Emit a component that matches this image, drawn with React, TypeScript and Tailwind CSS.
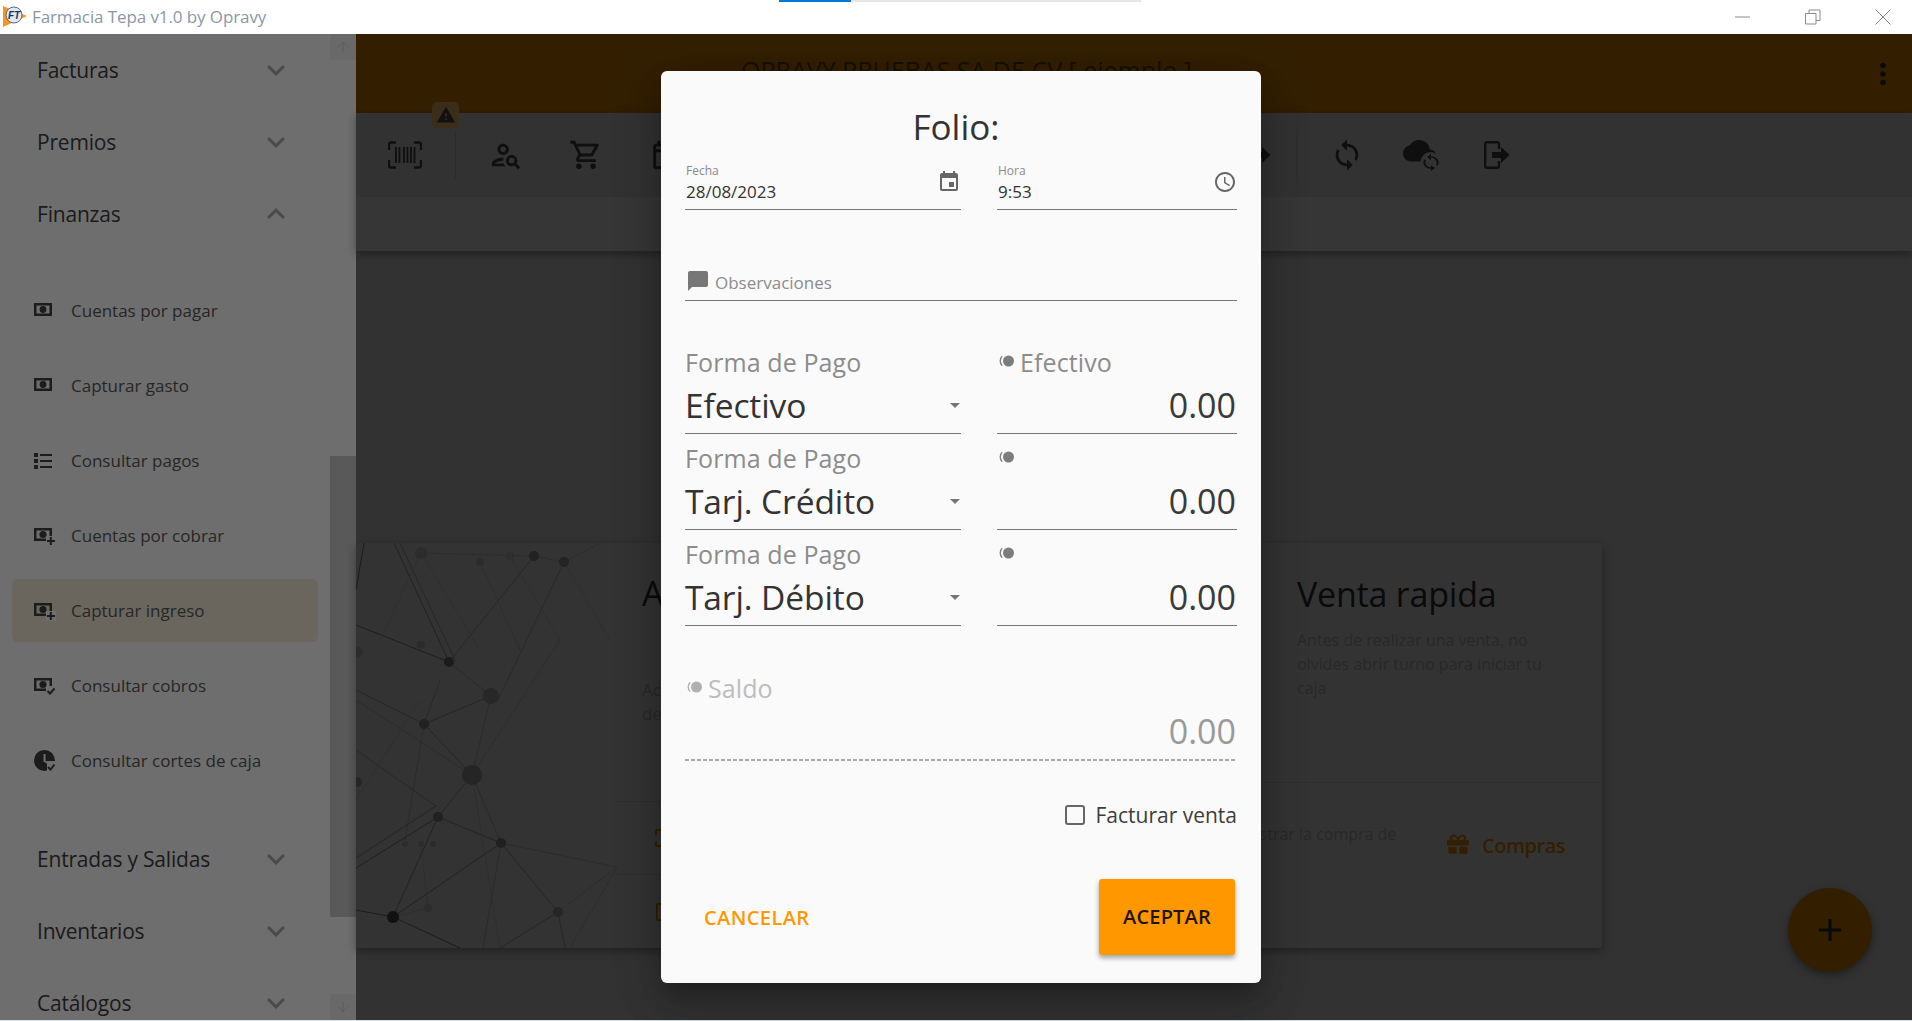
import React from 'react';
import { ArrowUp, ArrowDown } from 'lucide-react';
import { FaGift } from 'react-icons/fa';
import {
  MdExpandMore,
  MdExpandLess,
  MdWarning,
  MdMoreVert,
  MdOutlinePersonSearch,
  MdOutlineShoppingCart,
  MdOutlineEvent,
  MdEvent,
  MdAccessTime,
  MdModeComment,
  MdSync,
  MdAdd,
  MdCropFree,
  MdCheckBoxOutlineBlank,
} from 'react-icons/md';

const FONT = "font-['Open_Sans','Liberation_Sans',sans-serif]";

// money frame used by the finance entries
const MoneyIcon = ({ badge }: { badge?: 'plus' | 'check' }) => (
  <svg width="22" height="20" viewBox="0 0 22 20" fill="none" className="shrink-0">
    <path fillRule="evenodd" d="M0 2h18v13H0zM2.5 4.5v8h13v-8z" fill="#1c1c1c" />
    <circle cx="9" cy="8.5" r={badge ? 3.6 : 3.4} fill="#1c1c1c" />
    {badge && <rect x="12" y="10" width="10" height="10" fill="#6e6e6e" />}
    {badge === 'plus' && <path d="M16.8 11v8M13 15h8" stroke="#1c1c1c" strokeWidth="2" />}
    {badge === 'check' && <path d="M13.5 15l2.5 2.5 4.5-5" stroke="#1c1c1c" strokeWidth="2" />}
  </svg>
);

const ListIcon = () => (
  <svg width="22" height="20" viewBox="0 0 22 20" className="shrink-0" fill="#1c1c1c">
    <path d="M0 2h4v4H0zM0 8h4v4H0zM0 14h4v4H0zM6 3h12v2H6zM6 9h12v2H6zM6 15h12v2H6z" />
  </svg>
);

const CorteIcon = () => (
  <svg width="22" height="24" viewBox="0 0 22 24" className="shrink-0">
    <circle cx="10.5" cy="11.5" r="10.5" fill="#1c1c1c" />
    <path d="M10.5 5v7l3 2" stroke="#6e6e6e" strokeWidth="2" fill="none" />
    <rect x="13" y="12" width="9" height="12" fill="#6e6e6e" />
    <path d="M14 18l2.5 2.5 4-5" stroke="#1c1c1c" strokeWidth="2" fill="none" />
  </svg>
);

const BarcodeIcon = () => (
  <svg width="34" height="28" viewBox="0 0 34 28" fill="none" stroke="#0f0f0f" strokeWidth="2.4">
    <path d="M8 1.5H3a2 2 0 0 0-2 2V9M26 1.5h5a2 2 0 0 1 2 2V9M8 26.5H3a2 2 0 0 1-2-2V19M26 26.5h5a2 2 0 0 0 2-2V19" />
    <path d="M8 6v16M11.5 6v16M16 6v16M19.5 6v16M23 6v16M26.5 6v16" strokeWidth="1.8" />
  </svg>
);

const ExitIcon = () => (
  <svg width="26" height="28" viewBox="0 0 26 28" fill="none">
    <path d="M15 8V3a1.8 1.8 0 0 0-1.8-1.8H3A1.8 1.8 0 0 0 1.2 3v22A1.8 1.8 0 0 0 3 26.8h10.2A1.8 1.8 0 0 0 15 25v-5" stroke="#0f0f0f" strokeWidth="2.4" />
    <path d="M8 11h9V6l8.5 8-8.5 8v-5H8z" fill="#0f0f0f" />
  </svg>
);

const CloudSyncIcon = () => (
  <svg width="38" height="36" viewBox="0 0 38 36" fill="none">
    <path d="M27 12.5C26 6.8 21.5 3 16 3 12 3 8.5 5.3 6.8 8.6 3 9.2 0 12.5 0 16.5 0 20.9 3.6 24.5 8 24.5h18c4 0 7-3.1 7-6.5 0-3.4-2.6-5.300-6-5.500z" fill="#0f0f0f" />
    <circle cx="27.5" cy="25" r="10" fill="#323232" />
    <svg x="19.5" y="16" width="17" height="19" viewBox="3 0 18 24" preserveAspectRatio="none">
      <path
        fill="#0f0f0f"
        d="M12 4V1L8 5l4 4V6c3.31 0 6 2.69 6 6 0 1.01-.25 1.97-.7 2.8l1.46 1.46C19.54 15.03 20 13.57 20 12c0-4.42-3.58-8-8-8zm0 14c-3.31 0-6-2.69-6-6 0-1.01.25-1.97.7-2.8L5.24 7.74C4.46 8.97 4 10.43 4 12c0 4.42 3.58 8 8 8v3l4-4-4-4v3z"
      />
    </svg>
  </svg>
);

const CoinIcon = ({ color }: { color: string }) => (
  <svg width="18" height="14" viewBox="0 0 18 14" fill="none" className="shrink-0 mt-[9px]">
    <circle cx="10.5" cy="7" r="5.5" fill={color} />
    <path d="M4.2 2.3A6.5 6.5 0 0 0 4.2 11.7" stroke={color} strokeWidth="1.3" />
  </svg>
);

const Logo = () => (
  <svg width="26" height="22" viewBox="0 0 26 22">
    <path d="M1 0l24 10L1 21z" fill="#f7941d" />
    <circle cx="12" cy="9" r="8" fill="#e4e8ef" stroke="#5b6a86" />
    <text x="6" y="13" fontSize="10" fontWeight="700" fontStyle="italic" fill="#1d2f63" fontFamily="Liberation Sans, sans-serif">FT</text>
  </svg>
);

// nodes of the background picture
const NODES: [number, number, number, string][] = [
  [421, 553, 6, '#2c2c2c'], [480, 562, 4, '#2c2c2c'], [510, 556, 4, '#2e2e2e'], [534, 556, 5, '#222222'], [564, 562, 5, '#242424'],
  [449, 662, 5, '#1c1c1c'], [421, 645, 4, '#2c2c2c'], [358, 652, 5, '#2c2c2c'], [491, 696, 8, '#282828'], [424, 724, 5, '#222222'],
  [472, 775, 10, '#252525'], [357, 782, 5, '#262626'], [438, 817, 5, '#212121'], [501, 843, 5, '#202020'], [405, 844, 3, '#2c2c2c'],
  [421, 844, 3, '#2c2c2c'], [433, 844, 3, '#2c2c2c'], [393, 917, 6, '#111111'], [558, 912, 5, '#262626'], [428, 908, 4, '#2c2c2c'],
];

const EDGES: [number, number, number, number, string][] = [
  [364, 543, 356, 590, '#1c1c1c'], [394, 543, 449, 662, '#232323'], [400, 543, 456, 662, '#282828'], [356, 625, 449, 662, '#1e1e1e'],
  [534, 556, 449, 662, '#282828'], [564, 562, 498, 700, '#2a2a2a'], [449, 662, 491, 696, '#2a2a2a'], [421, 553, 534, 556, '#2e2e2e'],
  [534, 556, 564, 562, '#2d2d2d'], [564, 562, 600, 543, '#2e2e2e'], [491, 696, 424, 724, '#262626'], [424, 724, 472, 775, '#262626'],
  [356, 690, 424, 724, '#292929'], [440, 680, 424, 724, '#292929'], [424, 724, 405, 840, '#2c2c2c'], [472, 775, 438, 817, '#252525'],
  [472, 775, 501, 843, '#292929'], [356, 700, 472, 775, '#2c2c2c'], [491, 696, 472, 775, '#2c2c2c'], [356, 750, 436, 806, '#292929'],
  [438, 817, 356, 868, '#212121'], [436, 806, 356, 858, '#252525'], [438, 817, 501, 843, '#252525'], [438, 817, 393, 917, '#222222'],
  [501, 843, 393, 917, '#222222'], [501, 843, 558, 912, '#262626'], [501, 843, 617, 867, '#2c2c2c'], [501, 843, 483, 948, '#2a2a2a'],
  [393, 917, 356, 910, '#1c1c1c'], [393, 917, 460, 948, '#1c1c1c'], [558, 912, 500, 948, '#262626'], [558, 912, 565, 948, '#262626'],
  [558, 912, 617, 867, '#2e2e2e'], [617, 867, 570, 948, '#2e2e2e'], [472, 775, 560, 640, '#2e2e2e'], [480, 562, 520, 650, '#2f2f2f'],
  [421, 553, 380, 640, '#2f2f2f'], [421, 553, 480, 650, '#2f2f2f'], [510, 556, 560, 640, '#2f2f2f'], [356, 800, 420, 700, '#2f2f2f'],
  [421, 844, 428, 908, '#2e2e2e'], [428, 908, 393, 917, '#2e2e2e'], [564, 562, 610, 640, '#2f2f2f'], [500, 948, 472, 775, '#2f2f2f'],
];

const NetworkPicture = () => (
  <svg width="261" height="405" viewBox="356 543 261 405" className="block shrink-0">
    {EDGES.map(([x1, y1, x2, y2, c], i) => (
      <line key={i} x1={x1} y1={y1} x2={x2} y2={y2} stroke={c} strokeWidth="1" />
    ))}
    {NODES.map(([cx, cy, r, c], i) => (
      <circle key={i} cx={cx} cy={cy} r={r} fill={c} />
    ))}
  </svg>
);

const SideHeading = ({ label, open }: { label: string; open?: boolean }) => (
  <div className="h-[72px] shrink-0 flex items-center justify-between pl-[37px] pr-[36px]">
    <span className="text-[21px] text-[#1a1a1a] tracking-[-0.2px] mt-[2px]">{label}</span>
    {open ? <MdExpandLess size={36} color="#4a4a4a" /> : <MdExpandMore size={36} color="#4a4a4a" />}
  </div>
);

const SubItem = ({ label, icon, active }: { label: string; icon: React.ReactNode; active?: boolean }) => (
  <div className="h-[75px] pt-[4px] pb-[8px] pl-[12px]">
    <div className={`h-[63px] w-[306px] rounded-md flex items-center pl-[22px] gap-[15px] ${active ? 'bg-[#6a665e]' : ''}`}>
      <span className="w-[22px] flex justify-start">{icon}</span>
      <span className="text-[17px] text-[#262626] mt-[1px]">{label}</span>
    </div>
  </div>
);

const Sidebar = () => (
  <aside className="w-[356px] h-full shrink-0 bg-[#6e6e6e] flex overflow-hidden">
    <div className="w-[330px] shrink-0">
      <SideHeading label="Facturas" />
      <SideHeading label="Premios" />
      <SideHeading label="Finanzas" open />
      <div className="mt-[25px]">
        <SubItem label="Cuentas por pagar" icon={<MoneyIcon />} />
        <SubItem label="Capturar gasto" icon={<MoneyIcon />} />
        <SubItem label="Consultar pagos" icon={<ListIcon />} />
        <SubItem label="Cuentas por cobrar" icon={<MoneyIcon badge="plus" />} />
        <SubItem label="Capturar ingreso" icon={<MoneyIcon badge="plus" />} active />
        <SubItem label="Consultar cobros" icon={<MoneyIcon badge="check" />} />
        <SubItem label="Consultar cortes de caja" icon={<CorteIcon />} />
      </div>
      <div className="mt-[23px]">
        <SideHeading label="Entradas y Salidas" />
        <SideHeading label="Inventarios" />
        <SideHeading label="Catálogos" />
      </div>
    </div>
    <div className="w-[26px] shrink-0 flex flex-col">
      <div className="h-[26px] shrink-0 bg-[#696969] flex items-center justify-center">
        <ArrowUp size={16} color="#5c5c5c" strokeWidth={1.5} />
      </div>
      <div className="flex-1">
        <div className="mt-[396px] h-[461px] bg-[#595959]" />
      </div>
      <div className="h-[26px] shrink-0 bg-[#696969] flex items-center justify-center">
        <ArrowDown size={16} color="#5c5c5c" strokeWidth={1.5} />
      </div>
    </div>
  </aside>
);

const ToolIcon = ({ children }: { children: React.ReactNode }) => (
  <div className="w-[40px] h-[40px] shrink-0 flex items-center justify-center">{children}</div>
);

const Toolbar = () => (
  <div className="relative shrink-0 shadow-[0_3px_8px_rgba(0,0,0,0.35)] z-10">
    <div className="absolute left-[76px] top-[-11px] w-[27px] h-[26px] rounded-[5px] bg-[#3a2d1a] flex items-center justify-center">
      <MdWarning size={20} color="#111111" />
    </div>
    <div className="h-[84px] bg-[#323232] flex items-center pl-[29px]">
      <ToolIcon><BarcodeIcon /></ToolIcon>
      <div className="w-px h-[48px] bg-[#2c2c2c] mx-[30px]" />
      <ToolIcon><MdOutlinePersonSearch size={34} color="#0f0f0f" /></ToolIcon>
      <div className="w-[40px]" />
      <ToolIcon><MdOutlineShoppingCart size={34} color="#0f0f0f" /></ToolIcon>
      <div className="w-[40px]" />
      <ToolIcon><MdOutlineEvent size={34} color="#0f0f0f" /></ToolIcon>
      <div className="w-[552px]" />
      <ToolIcon><ExitIcon /></ToolIcon>
      <div className="w-px h-[48px] bg-[#2e2e2e] ml-[18px] mr-[30px]" />
      <ToolIcon><MdSync size={34} color="#0f0f0f" /></ToolIcon>
      <div className="w-[35px]" />
      <ToolIcon><CloudSyncIcon /></ToolIcon>
      <div className="w-[35px]" />
      <ToolIcon><ExitIcon /></ToolIcon>
    </div>
    <div className="h-[54px] bg-[#363636]" />
  </div>
);

const BackgroundCard = () => (
  <div className="mt-[292px] w-[1246px] h-[405px] flex bg-[#333333] shadow-[0_3px_8px_rgba(0,0,0,0.35)] rounded-r-[3px]">
    <NetworkPicture />
    <div className="w-[605px] shrink-0 flex flex-col">
      <div className="h-[259px] border-b border-[#2e2e2e] pl-[25px] pt-[26px]">
        <div className="text-[34px] leading-[48px] text-[#0a0a0a]">Abrir turno</div>
        <div className="mt-[61px] text-[17px] leading-[24px] text-[#282828]">
          Accede para iniciar tu turno
          <br />
          de caja
        </div>
      </div>
      <div className="h-[73px] border-b border-[#2e2e2e] pl-[35px] flex items-center">
        <MdCropFree size={24} color="#331f00" />
      </div>
      <div className="flex-1 pl-[36px] flex items-center">
        <MdCheckBoxOutlineBlank size={24} color="#331f00" />
      </div>
    </div>
    <div className="flex-1 flex flex-col">
      <div className="h-[240px] pl-[75px] pt-[26px] border-b border-[#2e2e2e]">
        <div className="text-[34px] leading-[50px] text-[#0a0a0a] tracking-[-0.2px]">Venta rapida</div>
        <div className="mt-[9px] w-[265px] text-[16px] leading-[24px] text-[#282828]">
          Antes de realizar una venta, no olvides abrir turno para iniciar tu caja
        </div>
      </div>
      <div className="flex-1 flex items-start justify-between pl-[6px] pr-[37px]">
        <span className="mt-[39px] text-[16px] leading-[24px] text-[#282828]">Registrar la compra de</span>
        <span className="mt-[48px] flex items-center gap-[13px] text-[#331f00]">
          <FaGift size={22} color="#331f00" className="mt-[-4px]" />
          <span className="text-[20px] leading-[30px] font-semibold tracking-[-0.5px]">Compras</span>
        </span>
      </div>
    </div>
  </div>
);

const MainArea = () => (
  <main className="relative flex-1 h-full flex flex-col bg-[#323232]">
    <div className="h-[79px] shrink-0 bg-[#331f00] flex items-center justify-between pl-[385px] pr-[12px]">
      <span className="text-[25px] text-[#151005] mb-[5px]">OPRAVY PRUEBAS SA DE CV [ ejemplo ]</span>
      <MdMoreVert size={34} color="#0a0a0a" />
    </div>
    <Toolbar />
    <BackgroundCard />
    <button className="absolute left-[1432px] top-[854px] w-[84px] h-[84px] rounded-full bg-[#331f00] flex items-center justify-center shadow-[0_3px_8px_rgba(0,0,0,0.4)]">
      <MdAdd size={38} color="#0a0a0a" />
    </button>
  </main>
);

const DateField = ({ label, value, icon }: { label: string; value: string; icon: React.ReactNode }) => (
  <div className="h-[46px] relative border-b-[1.5px] border-[#757575]">
    <div className="text-[12px] leading-[14px] text-[#8a8a8a] pl-px">{label}</div>
    <div className="mt-[1px] text-[17px] leading-[26px] text-[#333333] pl-px">{value}</div>
    <div className="absolute right-0 top-[6px] w-[24px] h-[24px] flex items-center justify-center">{icon}</div>
  </div>
);

const SelectField = ({ value }: { value: string }) => (
  <div className="h-[96px] pt-[7px] border-b-[1.5px] border-[#757575]">
    <div className="h-[36px] text-[25px] leading-[34px] text-[#8c8c8c] tracking-[0.1px]">Forma de Pago</div>
    <div className="h-[48px] flex items-center justify-between pr-[1px]">
      <span className="text-[33.5px] leading-[48px] text-[#333333] tracking-[-0.1px]">{value}</span>
      <span className="w-0 h-0 border-x-[5px] border-x-transparent border-t-[5px] border-t-[#757575]" />
    </div>
  </div>
);

const AmountField = ({ label, muted }: { label?: string; muted?: boolean }) => (
  <div className={`h-[96px] ${muted ? 'pt-[6px]' : 'pt-[7px] border-b-[1.5px] border-[#757575]'}`}>
    <div className={`h-[36px] flex items-start gap-[4px] pl-[1px] text-[25px] leading-[34px] tracking-[0.1px] ${muted ? 'text-[#bdbdbd]' : 'text-[#8c8c8c]'}`}>
      <CoinIcon color={muted ? '#b0b0b0' : '#7d7d7d'} />
      {label && <span>{label}</span>}
    </div>
    <div className={`h-[48px] text-right pr-[1px] text-[34px] leading-[48px] ${muted ? 'text-[#9a9a9a]' : 'text-[#3a3a3a]'}`}>0.00</div>
    {muted && (
      <div className="mt-[4px] h-[2px] bg-[repeating-linear-gradient(90deg,#a8a8a8_0,#a8a8a8_4px,transparent_4px,transparent_6px)]" />
    )}
  </div>
);

const PagoDialog = () => (
  <div className="absolute left-[661px] top-[71px] w-[600px] bg-[#fafafa] rounded-[6px] px-[24px] pb-[28px] z-20 shadow-[0_11px_15px_-7px_rgba(0,0,0,0.2),0_24px_38px_3px_rgba(0,0,0,0.14),0_9px_46px_8px_rgba(0,0,0,0.12)]">
    <div className="h-[93px] pt-[31px] text-center text-[35px] leading-[50px] text-[#333333] pr-[10px]">Folio:</div>
    <div className="grid grid-cols-[276px_1fr] gap-x-[36px]">
      <DateField label="Fecha" value="28/08/2023" icon={<MdEvent size={24} color="#666666" />} />
      <DateField label="Hora" value="9:53" icon={<MdAccessTime size={24} color="#666666" />} />
    </div>
    <div className="h-[91px] flex items-end gap-[5px] pl-[1px] pb-[5px] border-b-[1.5px] border-[#757575]">
      <MdModeComment size={24} color="#777777" className="mb-[2px] scale-x-[-1]" />
      <span className="text-[17px] leading-[24px] text-[#8c8c8c]">Observaciones</span>
    </div>
    <div className="mt-[37px] grid grid-cols-[276px_1fr] gap-x-[36px]">
      <SelectField value="Efectivo" />
      <AmountField label="Efectivo" />
      <SelectField value="Tarj. Crédito" />
      <AmountField />
      <SelectField value="Tarj. Débito" />
      <AmountField />
    </div>
    <div className="mt-[39px]">
      <AmountField label="Saldo" muted />
    </div>
    <div className="mt-[40px] h-[28px] flex items-center justify-end gap-[10px]">
      <span className="w-[20px] h-[20px] rounded-[3px] border-2 border-[#666666]" />
      <span className="text-[21px] leading-[28px] text-[#3d3d3d]">Facturar venta</span>
    </div>
    <div className="mt-[50px] h-[76px] flex items-center justify-between pr-[2px]">
      <button className="pl-[19px] text-[20px] font-semibold text-[#ff9800] tracking-[0.4px] mt-[2px]">CANCELAR</button>
      <button className="w-[136px] h-[76px] rounded-[3px] bg-[#ff9800] text-[20px] font-semibold text-[#1f1405] tracking-[0.2px] shadow-[0_3px_5px_rgba(0,0,0,0.35)]">ACEPTAR</button>
    </div>
  </div>
);

const TitleBar = () => (
  <div className="relative h-[34px] shrink-0 bg-white flex items-center justify-between pl-[2px] pr-[21px]">
    <div className="absolute left-[779px] top-0 w-[72px] h-[2px] bg-[#0078d7]" />
    <div className="absolute left-[851px] top-0 w-[290px] h-[2px] bg-[#e6e6e6]" />
    <div className="flex items-center gap-[4px]">
      <Logo />
      <span className="text-[17px] text-[#8b97a8] tracking-[-0.1px]">Farmacia Tepa v1.0 by Opravy</span>
    </div>
    <div className="flex items-center gap-[54px]">
      <svg width="16" height="16" viewBox="0 0 16 16" fill="none" stroke="#8a8a8a"><path d="M0 8h15" /></svg>
      <svg width="16" height="16" viewBox="0 0 16 16" fill="none" stroke="#8a8a8a"><path d="M.5 4.5h10.5v10.5H.5zM4 4.5V1h11v10.5h-4" /></svg>
      <svg width="16" height="16" viewBox="0 0 16 16" fill="none" stroke="#8a8a8a"><path d="M.5.5l15 15M15.5.5l-15 15" /></svg>
    </div>
  </div>
);

export default function App() {
  return (
    <div className={`relative w-[1912px] h-[1021px] overflow-hidden flex flex-col bg-[#323232] ${FONT}`}>
      <TitleBar />
      <div className="flex h-[986px] shrink-0">
        <Sidebar />
        <MainArea />
      </div>
      <div className="h-px shrink-0 bg-[#d4e2e9]" />
      <PagoDialog />
    </div>
  );
}
